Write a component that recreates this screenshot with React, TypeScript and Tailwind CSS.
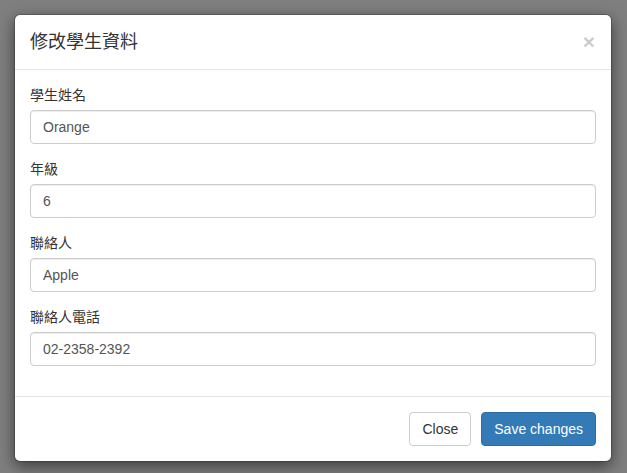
const fields = [
  { label: '學生姓名', value: 'Orange' },
  { label: '年級', value: '6' },
  { label: '聯絡人', value: 'Apple' },
  { label: '聯絡人電話', value: '02-2358-2392' },
]

const font = { fontFamily: '"Liberation Sans", "Noto Sans CJK TC", sans-serif' }

export default function App() {
  return (
    <div className="min-h-[473px] bg-[#7f7f7f] pt-[14px] px-[14px] text-[14px] text-[#333]" style={font}>
      <div className="w-[598px] rounded-[6px] border border-black/20 bg-white bg-clip-padding shadow-[0_5px_15px_rgba(0,0,0,0.5)]">
        {/* Header */}
        <div className="flex items-start justify-between border-b border-[#e5e5e5] p-[15px]">
          <h4 className="text-[18px] leading-[24px] text-[#333]">修改學生資料</h4>
          <button className="mt-[1px] mr-[1px] text-[21px] font-bold leading-none text-black opacity-20">×</button>
        </div>

        {/* Body */}
        <div className="p-[15px]">
          {fields.map((f) => (
            <div key={f.label} className="mb-[15px]">
              <label className="mb-[5px] block leading-[20px]">{f.label}</label>
              <input
                type="text"
                defaultValue={f.value}
                className="block h-[34px] w-full rounded-[4px] border border-[#ccc] px-[12px] py-[6px] text-[14px] text-[#555] shadow-[inset_0_1px_1px_rgba(0,0,0,0.075)] outline-none"
              />
            </div>
          ))}
        </div>

        {/* Footer */}
        <div className="flex justify-end gap-[10px] border-t border-[#e5e5e5] p-[15px]">
          <button className="h-[34px] rounded-[4px] border border-[#ccc] bg-white px-[12px] text-[14px] text-[#333]">
            Close
          </button>
          <button className="h-[34px] rounded-[4px] border border-[#2e6da4] bg-[#337ab7] px-[12px] text-[14px] text-white">
            Save changes
          </button>
        </div>
      </div>
    </div>
  )
}
